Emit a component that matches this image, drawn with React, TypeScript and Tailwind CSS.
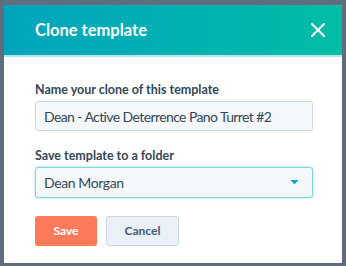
import React from 'react'

const font = { fontFamily: 'Lato, "Noto Sans", sans-serif' }

export default function App() {
  return (
    <div className="w-[346px] h-[266px] bg-[#5f6d7e] pt-[5px] pl-[4px]" style={font}>
      <div className="w-[338px] h-[258px] bg-white flex flex-col overflow-hidden">
        <div className="h-[52px] bg-gradient-to-r from-[#00a4bd] to-[#00bda5] flex items-center justify-between pl-[31px] pr-[17px] border-b-[2px] border-[#b3e6ee]">
          <span className="text-white text-[16.5px] font-bold">Clone template</span>
          <svg width="14" height="14" viewBox="0 0 14 14" fill="none">
            <path d="M1 1L13 13M13 1L1 13" stroke="white" strokeWidth="2" strokeLinecap="round" />
          </svg>
        </div>
        <div className="pl-[31px] pr-[29px] pt-[25px] flex flex-col">
          <label className="text-[12.5px] font-bold text-[#33475b] leading-[16px]">Name your clone of this template</label>
          <div className="mt-[3px] h-[30px] rounded-[3px] border border-[#cbd6e2] bg-[#f5f8fa] flex items-center px-[8px] text-[14px] tracking-[-0.6px] text-[#33475b] whitespace-nowrap">
            Dean - Active Deterrence Pano Turret #2
          </div>
          <label className="mt-[17px] text-[12.5px] font-bold text-[#33475b] leading-[16px]">Save template to a folder</label>
          <div className="mt-[3px] h-[31px] rounded-[3px] border-[1.5px] border-[#7fd5e2] bg-[#f5f8fa] flex items-center justify-between pl-[8px] pr-[13px] text-[14px] tracking-[-0.4px] text-[#33475b] shadow-[0_0_3px_rgba(0,164,189,0.4)]">
            <span>Dean Morgan</span>
            <svg width="9" height="5" viewBox="0 0 10 6">
              <path d="M0 0H10L5 5Z" fill="#00a4bd" />
            </svg>
          </div>
          <div className="mt-[18px] flex gap-[9px]">
            <button className="w-[62px] h-[30px] rounded-[3px] bg-[#ff7a59] text-white text-[12px] font-bold">Save</button>
            <button className="w-[73px] h-[30px] rounded-[3px] bg-[#eaf0f6] border border-[#cbd6e2] text-[#425b76] text-[12px] font-bold">Cancel</button>
          </div>
        </div>
      </div>
    </div>
  )
}
